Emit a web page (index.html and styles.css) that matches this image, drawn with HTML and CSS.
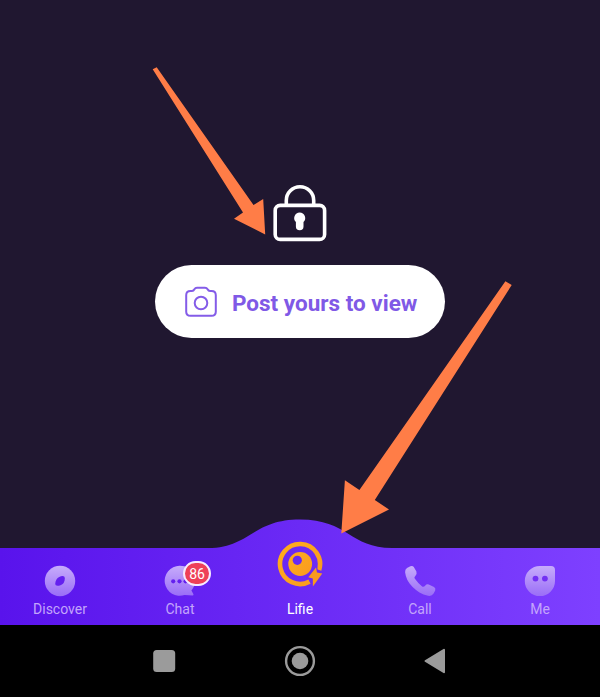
FILE: index.html
```html
<!DOCTYPE html>
<html lang="en">
<head>
<meta charset="utf-8">
<title>Lifie</title>
<link rel="stylesheet" href="styles.css">
</head>
<body>
<div class="screen">
  <main class="locked">
    <svg class="lock" viewBox="273 184 54 58" fill="none" stroke="#fff" stroke-width="3.6">
      <rect x="275.2" y="205.4" width="49.4" height="34" rx="5"/>
      <path d="M286.300 205V200.500a13.700 13.700 0 0 1 27.400 0V205"/>
      <path d="M299.7 212.5a5.6 5.6 0 0 1 3.8 9.6V226.5a3.8 3.8 0 0 1-7.6 0V222.100a5.600 5.600 0 0 1 3.800-9.600z" fill="#fff" stroke="none"/>
    </svg>
    <button class="post">
      <svg class="camera" viewBox="185 286 32 32" fill="none" stroke="#845ce8" stroke-width="2">
        <path d="M190.500 291H192Q193.600 291 194.400 289.300Q195.300 287.700 197 287.700H205Q206.700 287.700 207.600 289.300Q208.400 291 210 291H211.500Q215.800 291 215.800 295.300V311.700Q215.800 315.800 211.500 315.800H190.500Q186.200 315.800 186.200 311.700V295.300Q186.200 291 190.500 291Z"/>
        <circle cx="201" cy="303" r="6.300"/>
      </svg>
      <span>Post yours to view</span>
    </button>
  </main>

  <nav class="tabs">
    <svg class="wave" viewBox="0 519 600 106">
      <defs>
        <linearGradient id="bar" x1="0" y1="0" x2="1" y2="0">
          <stop offset="0" stop-color="#5913ec"/>
          <stop offset=".5" stop-color="#6b2af5"/>
          <stop offset="1" stop-color="#7e40ff"/>
        </linearGradient>
        <linearGradient id="icon" x1="0" y1="0" x2="0" y2="1">
          <stop offset="0" stop-color="#c7acfb"/>
          <stop offset="1" stop-color="#9a6df7"/>
        </linearGradient>
        <linearGradient id="gold" x1="0" y1="0" x2="1" y2="1">
          <stop offset="0" stop-color="#ffad1b"/>
          <stop offset="1" stop-color="#f99a20"/>
        </linearGradient>
      </defs>
      <path fill="url(#bar)" d="M0 548H208C250 548 252 519.500 300 519.500C348 519.500 350 548 392 548H600V625H0Z"/>
    </svg>
    <a class="tab">
      <svg class="icon" viewBox="0 0 32 32">
        <circle cx="16" cy="16" r="15.200" fill="url(#icon)"/>
        <path d="M20.200 11.500Q21.300 12.500 20.600 15.500Q19.500 20 15 20.700Q12.500 21 11.800 20.300Q10.800 19 11.600 16.500Q13 12 17 11.200Q19.300 10.700 20.200 11.500Z" fill="#6420ef"/>
      </svg>
      <span>Discover</span>
    </a>
    <a class="tab">
      <svg class="icon" viewBox="0 0 32 32">
        <path d="M15.500 .8A15 15 0 1 0 20.500 30L28.500 30.500Q30 30.300 29.200 28.800L27.400 25.500A15 15 0 0 0 15.500 .8Z" fill="url(#icon)"/>
        <g fill="#6420ef"><circle cx="9.200" cy="16.300" r="2.100"/><circle cx="15.500" cy="16.300" r="2.100"/><circle cx="21.600" cy="16.300" r="2.100"/></g>
      </svg>
      <b class="badge">86</b>
      <span>Chat</span>
    </a>
    <a class="tab active">
      <svg class="logo" viewBox="277 541 46 46">
        <path d="M319.100 570A20 20 0 1 0 309.500 581.600" fill="none" stroke="url(#gold)" stroke-width="4.600"/>
        <circle cx="300.200" cy="564" r="11.900" fill="url(#gold)"/>
        <circle cx="297.300" cy="560.300" r="4.600" fill="#6929f2"/>
        <path d="M316 567.500L308.300 577.200L312.800 578.400L312.900 586.600L322.300 573.400L317 572.600Z" fill="#f99a20" stroke="#6b2af5" stroke-width="2.400" paint-order="stroke"/>
      </svg>
      <span>Lifie</span>
    </a>
    <a class="tab">
      <svg class="icon" viewBox="0 0 32 32">
        <path d="M3 3L6.400 1.200Q8.600.3 9.800 2.100L12.400 6.600Q13.200 9 11.500 10.700Q9.800 12.100 10.700 13.600Q14 18.400 18.100 21.400Q19.800 22.400 21.100 20.700Q22.700 18.700 24.700 19.400L30 21.900Q32 23.300 31.200 25.600L29.600 28.600Q27.800 31.500 24 30.800C12 28 2 17.500 1.100 7.200Q.9 4.400 3 3Z" fill="url(#icon)"/>
      </svg>
      <span>Call</span>
    </a>
    <a class="tab">
      <svg class="icon" viewBox="0 0 32 32">
        <path d="M16 .9H27Q31 .9 31 4.900V16A15.100 15.100 0 1 1 16 .9Z" fill="url(#icon)"/>
        <g fill="#7330f3"><circle cx="11.500" cy="13.600" r="2.900"/><circle cx="20.900" cy="13.600" r="2.900"/></g>
      </svg>
      <span>Me</span>
    </a>
  </nav>

  <footer class="system">
    <svg viewBox="0 0 32 32"><rect x="4.200" y="5" width="22" height="22" rx="3.500" fill="#9b9b9b"/></svg>
    <svg viewBox="0 0 32 32"><circle cx="16" cy="16" r="13.900" fill="none" stroke="#9b9b9b" stroke-width="2.400"/><circle cx="16" cy="16" r="8.300" fill="#9b9b9b"/></svg>
    <svg viewBox="0 0 32 32"><path d="M25 4.800V27.200L6.500 16Z" fill="#9b9b9b" stroke="#9b9b9b" stroke-width="2" stroke-linejoin="round"/></svg>
  </footer>

  <svg class="arrows" viewBox="0 0 600 697" fill="#ff7d47">
    <path d="M152.700 69.300L156.700 67.200L253.500 205L263.200 199L265.200 234.500L234 218.700L243 212.500Z"/>
    <path d="M505.400 281.200L511.700 285L374.800 500L389 509.400L341.300 533.500L344.900 480.300L359.400 490Z"/>
  </svg>
</div>
</body>
</html>
```

FILE: styles.css
```css
* {
  box-sizing: border-box;
}

body {
  margin: 0;
  font-family: Roboto, "Liberation Sans", sans-serif;
}

.screen {
  position: relative;
  display: flex;
  flex-direction: column;
  width: 600px;
  height: 697px;
  overflow: hidden;
  background: #201730;
}

.locked {
  display: flex;
  flex-direction: column;
  align-items: center;
  height: 548px;
  padding-top: 184px;
}

.lock {
  width: 54px;
  height: 58px;
  margin-bottom: 23px;
}

.post {
  display: flex;
  align-items: center;
  gap: 15px;
  width: 290px;
  height: 73px;
  padding: 0 0 0 30px;
  border: 0;
  border-radius: 37px;
  background: #fff;
  color: #8059e6;
  font: 700 22.5px/30px Roboto, "Liberation Sans", sans-serif;
  white-space: nowrap;
}

.post span {
  padding-top: 2px;
}

.camera {
  width: 32px;
  height: 32px;
}

.tabs {
  position: relative;
  display: grid;
  grid-template-columns: repeat(5, 1fr);
  height: 77px;
}

.wave {
  position: absolute;
  bottom: 0;
  left: 0;
  width: 600px;
  height: 106px;
}

.tab {
  position: relative;
  display: flex;
  flex-direction: column;
  align-items: center;
  justify-content: flex-end;
  height: 77px;
  padding-bottom: 7px;
  color: #c3a5fb;
  font-size: 14px;
  line-height: 18px;
}

.icon {
  flex: none;
  width: 32px;
  height: 32px;
  margin-bottom: 3px;
}

.active {
  color: #fff;
}

.logo {
  flex: none;
  width: 46px;
  height: 46px;
  margin-bottom: 13px;
}

.badge {
  position: absolute;
  top: 13px;
  left: 63px;
  width: 28px;
  height: 25px;
  border: 2px solid #f7eaff;
  border-radius: 13px;
  background: #ee4058;
  color: #fff;
  font-size: 14px;
  font-weight: 400;
  line-height: 22px;
  text-align: center;
}

.system {
  display: flex;
  justify-content: center;
  gap: 103px;
  height: 72px;
  padding-top: 20px;
  background: #000;
}

.system svg {
  width: 32px;
  height: 32px;
}

.arrows {
  position: absolute;
  inset: 0;
  width: 600px;
  height: 697px;
}
```
